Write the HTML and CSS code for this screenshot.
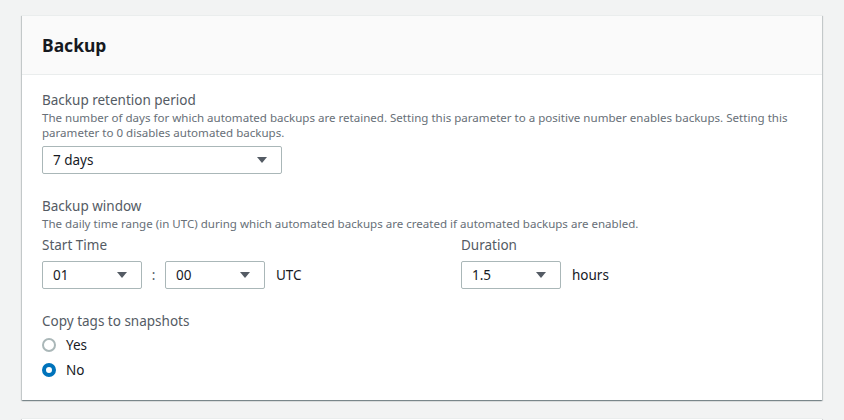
FILE: index.html
```html
<!DOCTYPE html>
<html>
<head>
<meta charset="utf-8">
<link rel="stylesheet" href="styles.css">
</head>
<body>
<div class="page">
  <section class="card">
    <header class="card-header"><h2>Backup</h2></header>
    <div class="card-body">
      <div class="field">
        <div class="label">Backup retention period</div>
        <div class="desc">The number of days for which automated backups are retained. Setting this parameter to a positive number enables backups. Setting this parameter to 0 disables automated backups.</div>
        <div class="select wide"><span>7 days</span><i class="caret"></i></div>
      </div>
      <div class="field">
        <div class="label">Backup window</div>
        <div class="desc">The daily time range (in UTC) during which automated backups are created if automated backups are enabled.</div>
        <div class="window">
          <div class="col start">
            <div class="label small">Start Time</div>
            <div class="row">
              <div class="select narrow"><span>01</span><i class="caret"></i></div>
              <span class="colon">:</span>
              <div class="select narrow"><span>00</span><i class="caret"></i></div>
              <span class="unit">UTC</span>
            </div>
          </div>
          <div class="col">
            <div class="label small">Duration</div>
            <div class="row">
              <div class="select narrow"><span>1.5</span><i class="caret"></i></div>
              <span class="unit">hours</span>
            </div>
          </div>
        </div>
      </div>
      <div class="field last">
        <div class="label">Copy tags to snapshots</div>
        <div class="radios">
          <label class="radio"><span class="dot"></span>Yes</label>
          <label class="radio"><span class="dot on"></span>No</label>
        </div>
      </div>
    </div>
  </section>
  <section class="card next"></section>
</div>
</body>
</html>
```
FILE: styles.css
```css
* { box-sizing: border-box; }
html, body { margin: 0; padding: 0; }
body {
  background: #f2f3f3;
  font-family: "Noto Sans", "Open Sans", Arial, sans-serif;
  color: #16191f;
  overflow: hidden;
  height: 420px;
}
.page {
  padding: 15px 22px 0 22px;
  width: 844px;
  height: 420px;
  overflow: hidden;
}
.card {
  width: 800px;
  background: #fff;
  box-shadow: 0 1px 1px 0 rgba(0,28,36,.3), 1px 1px 1px 0 rgba(0,28,36,.15), -1px 1px 1px 0 rgba(0,28,36,.15);
  border-top: 1px solid #eaeded;
}
.card.next { margin-top: 18px; height: 2px; }
.card-header {
  background: #fafafa;
  border-bottom: 1px solid #eaeded;
  height: 59px;
  padding: 0 20px;
  display: flex;
  align-items: center;
}
.card-header h2 {
  margin: 0;
  font-size: 17.5px;
  font-weight: 700;
  color: #16191f;
  line-height: 22px;
}
.card-body {
  padding: 15px 20px 20px 20px;
}
.field { margin-bottom: 22px; }
.field.last { margin-bottom: 0; }
.label {
  font-size: 13.5px;
  line-height: 20px;
  color: #545b64;
}
.desc {
  font-size: 11.55px;
  line-height: 15px;
  color: #687078;
  margin-bottom: 6px;
}
.window { margin-top: -2px; }
.label.small { margin-bottom: 6px; }
.select {
  height: 28px;
  border: 1px solid #aab7b8;
  border-radius: 2px;
  display: flex;
  align-items: center;
  justify-content: space-between;
  padding: 0 14px 0 10px;
  font-size: 13.5px;
  color: #16191f;
  background: #fff;
}
.select.wide { width: 240px; }
.select.narrow { width: 100px; }
.caret {
  width: 0; height: 0;
  border-left: 5px solid transparent;
  border-right: 5px solid transparent;
  border-top: 6px solid #545b64;
}
.window { display: flex; }
.col.start { width: 419px; }
.row { display: flex; align-items: center; }
.colon { width: 23px; text-align: center; font-size: 13.5px; color: #545b64; }
.unit { margin-left: 11px; font-size: 13.5px; color: #16191f; }
.radios { display: flex; flex-direction: column; gap: 5px; margin-top: 4px; }
.radio {
  display: flex;
  align-items: center;
  font-size: 13.5px;
  line-height: 20px;
  color: #16191f;
}
.dot {
  width: 14px; height: 14px;
  border-radius: 50%;
  border: 2px solid #aab7b8;
  margin-right: 10px;
  background: #fff;
}
.dot.on {
  border: 4px solid #0073bb;
}
```
